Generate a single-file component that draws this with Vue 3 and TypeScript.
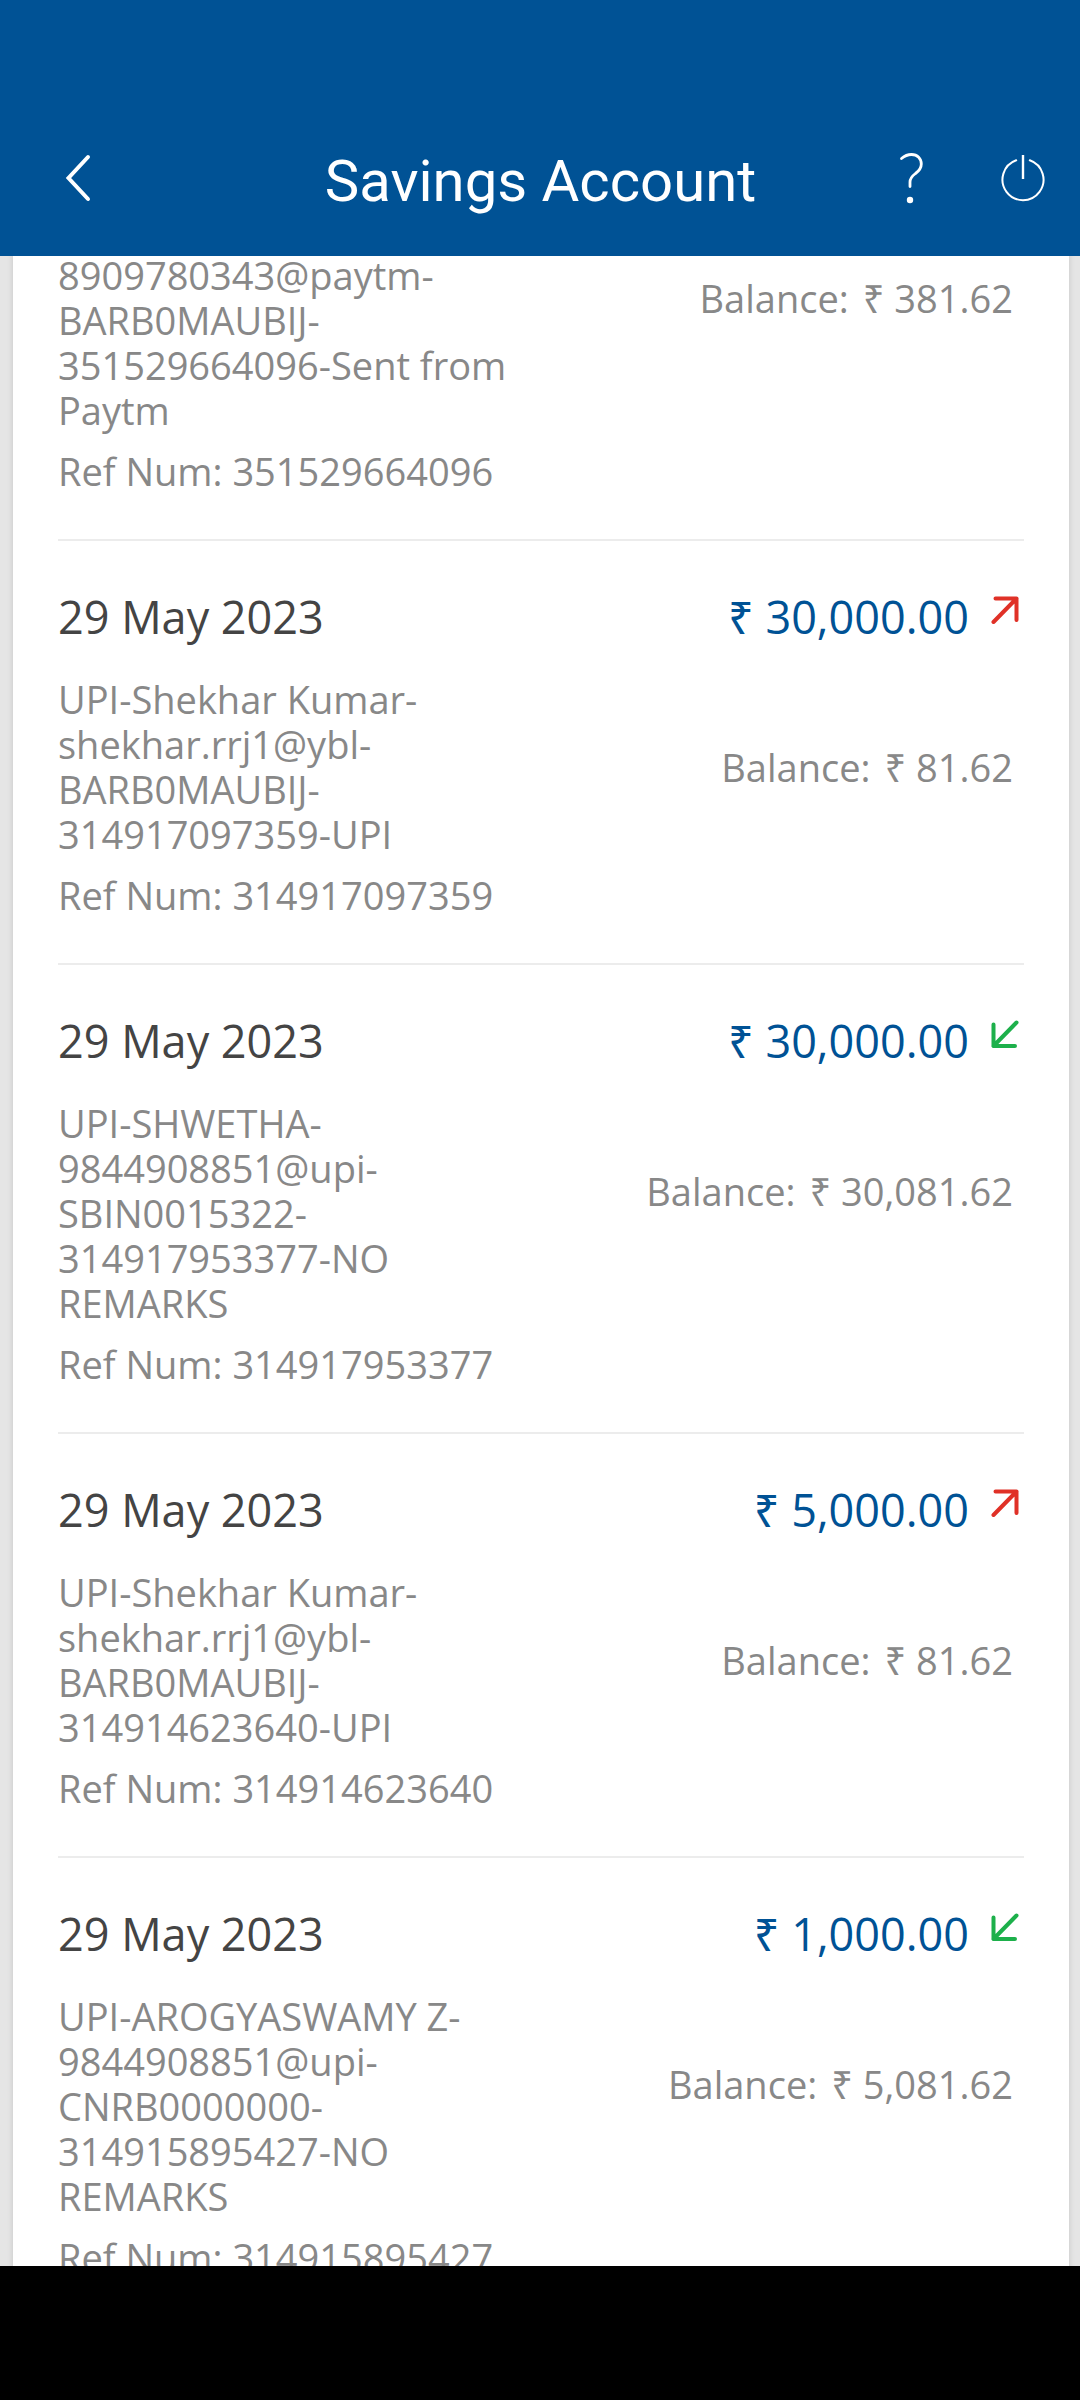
<script setup lang="ts">
type Direction = 'debit' | 'credit'

interface Transaction {
  date?: string
  amount?: string
  direction?: Direction
  narration: string
  balance: string
  reference: string
}

const transactions: Transaction[] = [
  {
    narration: '8909780343@paytm-BARB0MAUBIJ-351529664096-Sent from Paytm',
    balance: '381.62',
    reference: '351529664096',
  },
  {
    date: '29 May 2023',
    amount: '30,000.00',
    direction: 'debit',
    narration: 'UPI-Shekhar Kumar-shekhar.rrj1@ybl-BARB0MAUBIJ-314917097359-UPI',
    balance: '81.62',
    reference: '314917097359',
  },
  {
    date: '29 May 2023',
    amount: '30,000.00',
    direction: 'credit',
    narration: 'UPI-SHWETHA-9844908851@upi-SBIN0015322-314917953377-NO REMARKS',
    balance: '30,081.62',
    reference: '314917953377',
  },
  {
    date: '29 May 2023',
    amount: '5,000.00',
    direction: 'debit',
    narration: 'UPI-Shekhar Kumar-shekhar.rrj1@ybl-BARB0MAUBIJ-314914623640-UPI',
    balance: '81.62',
    reference: '314914623640',
  },
  {
    date: '29 May 2023',
    amount: '1,000.00',
    direction: 'credit',
    narration: 'UPI-AROGYASWAMY Z-9844908851@upi-CNRB0000000-314915895427-NO REMARKS',
    balance: '5,081.62',
    reference: '314915895427',
  },
]

// A narration may wrap after any of its hyphens.
const segments = (text: string): string[] => text.split(/(?<=-)/)
</script>

<template>
  <div class="screen">
    <header class="top-bar">
      <div class="side">
        <button type="button" class="icon-button" aria-label="Back">
          <svg width="28" height="50" viewBox="0 0 28 50" fill="none" stroke="#fff" stroke-width="4" stroke-linecap="round" stroke-linejoin="miter">
            <path d="M24 4 L4.500 25 L24 46" />
          </svg>
        </button>
      </div>
      <h1>Savings Account</h1>
      <div class="side actions">
        <button type="button" class="icon-button" aria-label="Help">
          <svg width="28" height="54" viewBox="0 0 28 54" fill="none" stroke="#fff" stroke-width="2.800" stroke-linecap="round">
            <path d="M4.500 7.500 C8 4.500 11 3.500 14.500 3.500 C20.500 3.500 24.300 7.500 24.300 13 C24.300 17.500 22 20 18.500 22.500 C14.500 25.500 13 27.500 13 31 V35.500" />
            <circle cx="13" cy="49" r="3.200" fill="#fff" stroke="none" />
          </svg>
        </button>
        <button type="button" class="icon-button" aria-label="Log out">
          <svg width="48" height="54" viewBox="0 1 48 54" fill="none" stroke="#fff" stroke-width="2" stroke-linecap="round">
            <path d="M17.200 10.300 A20.500 20.500 0 1 0 30.800 10.300" />
            <path d="M24 5 V29" stroke-width="2.400" stroke-linecap="butt" />
          </svg>
        </button>
      </div>
    </header>

    <main class="content">
      <ul class="card">
        <li v-for="item in transactions" :key="item.reference" class="row" :class="{ continued: !item.date }">
          <div v-if="item.date" class="row-head">
            <span class="date">{{ item.date }}</span>
            <span class="amount">
              ₹ {{ item.amount }}
              <svg v-if="item.direction === 'debit'" class="arrow debit" viewBox="0 0 28 28" role="img" aria-label="Debit">
                <path d="M4.500 2.500 H25.500 V24 M25.500 2.500 L2.500 26" />
              </svg>
              <svg v-else class="arrow credit" viewBox="0 0 28 28" role="img" aria-label="Credit">
                <path d="M2.500 4.500 V26 H24 M2.500 26 L25.500 2.500" />
              </svg>
            </span>
          </div>
          <div class="row-body">
            <p class="narration">
              <template v-for="(part, i) in segments(item.narration)" :key="i">{{ part }}<wbr></template>
            </p>
            <p class="balance"><span>Balance:</span><span>₹ {{ item.balance }}</span></p>
          </div>
          <p class="reference">Ref Num: {{ item.reference }}</p>
        </li>
      </ul>
    </main>

    <div class="system-bar"></div>
  </div>
</template>

<style>
body {
  margin: 0;
  background: #e5e5e5;
}
</style>

<style scoped>
.screen {
  display: flex;
  flex-direction: column;
  height: 100vh;
  overflow: hidden;
  font-family: "Open Sans", "Noto Sans", sans-serif;
  font-size: 38px;
  line-height: 45px;
  color: #888;
}

.top-bar {
  display: flex;
  align-items: center;
  flex: none;
  box-sizing: border-box;
  padding: 106px 33px 0 64px;
  height: 256px;
  background: #005295;
  position: relative;
  z-index: 1;
}

.side {
  display: flex;
  flex: 1 0 0;
  padding-bottom: 6px;
}

.actions {
  justify-content: flex-end;
  gap: 74px;
}

.icon-button {
  display: flex;
  padding: 0;
  border: 0;
  background: none;
  cursor: pointer;
}

h1 {
  margin: 0 30px 0 0;
  font-family: Roboto, sans-serif;
  font-size: 58px;
  font-weight: 400;
  line-height: 68px;
  color: #fff;
}

.content {
  flex: 1 1 0;
  min-height: 0;
  overflow: hidden;
  padding: 0 11px 0 13px;
}

.card {
  margin: 0;
  padding: 0 45px;
  list-style: none;
  background: #fff;
  box-shadow: 0 0 6px rgba(0, 0, 0, 0.14);
}

.row {
  padding: 44px 0 45px;
  border-bottom: 2px solid #ececec;
}

.row.continued {
  padding-top: 0;
}

.continued .row-body {
  margin-top: -3px;
}

.row-head {
  display: flex;
  justify-content: space-between;
  margin-bottom: 28px;
  font-size: 45px;
  line-height: 64px;
}

.date {
  color: #444;
}

.amount {
  display: flex;
  gap: 22px;
  padding-right: 5px;
  color: #005295;
}

.arrow {
  width: 28px;
  height: 28px;
  margin-top: 11px;
  fill: none;
  stroke-width: 4;
  stroke-linecap: round;
  stroke-linejoin: round;
}

.debit {
  stroke: #e03127;
}

.credit {
  stroke: #1db04b;
}

.row-body {
  display: flex;
  justify-content: space-between;
  align-items: flex-start;
}

.narration,
.balance,
.reference {
  margin: 0;
}

.narration {
  width: 50%;
}

.balance {
  display: flex;
  gap: 14px;
  padding: 68px 11px 0 0;
}

.continued .balance {
  padding-top: 23px;
}

.reference {
  margin-top: 16px;
}

.system-bar {
  flex: none;
  height: 134px;
  background: #000;
}
</style>
